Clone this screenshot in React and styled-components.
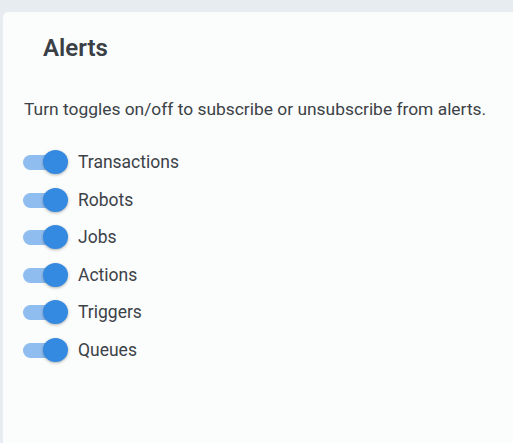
import React, { useState } from "react";
import styled, { createGlobalStyle } from "styled-components";

const Global = createGlobalStyle`
  html, body, #root { height: 100%; }
  body {
    margin: 0;
    background: #e6ecf0;
    font-family: Roboto, "Liberation Sans", sans-serif;
    overflow: hidden;
  }
`;

const Page = styled.div`
  box-sizing: border-box;
  height: 100%;
  padding: 12px 0 0 3px;
  display: flex;
`;

const Card = styled.section`
  flex: 1;
  background: #fbfcfc;
  border-radius: 5px 0 0 0;
  padding: 22px 0 0 19px;
  display: flex;
  flex-direction: column;
`;

const Title = styled.h1`
  margin: 0 0 0 21px;
  font-size: 24px;
  line-height: 28px;
  font-weight: 600;
  color: #3a4046;
`;

const Description = styled.p`
  margin: 35px 0 0 2px;
  font-size: 17.4px;
  line-height: 24px;
  color: #3c4247;
`;

const List = styled.ul`
  list-style: none;
  margin: 29px 0 0 0;
  padding: 0;
  display: flex;
  flex-direction: column;
  gap: 13.6px;
`;

const Row = styled.li`
  display: flex;
  align-items: center;
  gap: 10px;
  height: 24px;
  cursor: pointer;
`;

const Toggle = styled.span`
  position: relative;
  width: 46px;
  height: 24px;
  flex: none;
  &::before {
    content: "";
    position: absolute;
    left: 1px;
    top: 5px;
    width: 39px;
    height: 15px;
    border-radius: 7.5px;
    background: ${(p) => (p.$on ? "#8fbdf0" : "#c4c9cd")};
  }
  &::after {
    content: "";
    position: absolute;
    top: 0;
    left: ${(p) => (p.$on ? "21px" : "0")};
    width: 25px;
    height: 24px;
    border-radius: 50%;
    background: ${(p) => (p.$on ? "#3489e0" : "#f5f5f5")};
    box-shadow: 0 1px 3px rgba(0, 0, 0, 0.3);
  }
`;

const Label = styled.span`
  font-size: 17.5px;
  color: #3c4247;
`;

const items = ["Transactions", "Robots", "Jobs", "Actions", "Triggers", "Queues"];

export default function App() {
  const [state, setState] = useState(() => Object.fromEntries(items.map((i) => [i, true])));
  return (
    <>
      <Global />
      <Page>
        <Card>
          <Title>Alerts</Title>
          <Description>Turn toggles on/off to subscribe or unsubscribe from alerts.</Description>
          <List>
            {items.map((it) => (
              <Row key={it} onClick={() => setState((s) => ({ ...s, [it]: !s[it] }))}>
                <Toggle $on={state[it]} />
                <Label>{it}</Label>
              </Row>
            ))}
          </List>
        </Card>
      </Page>
    </>
  );
}
